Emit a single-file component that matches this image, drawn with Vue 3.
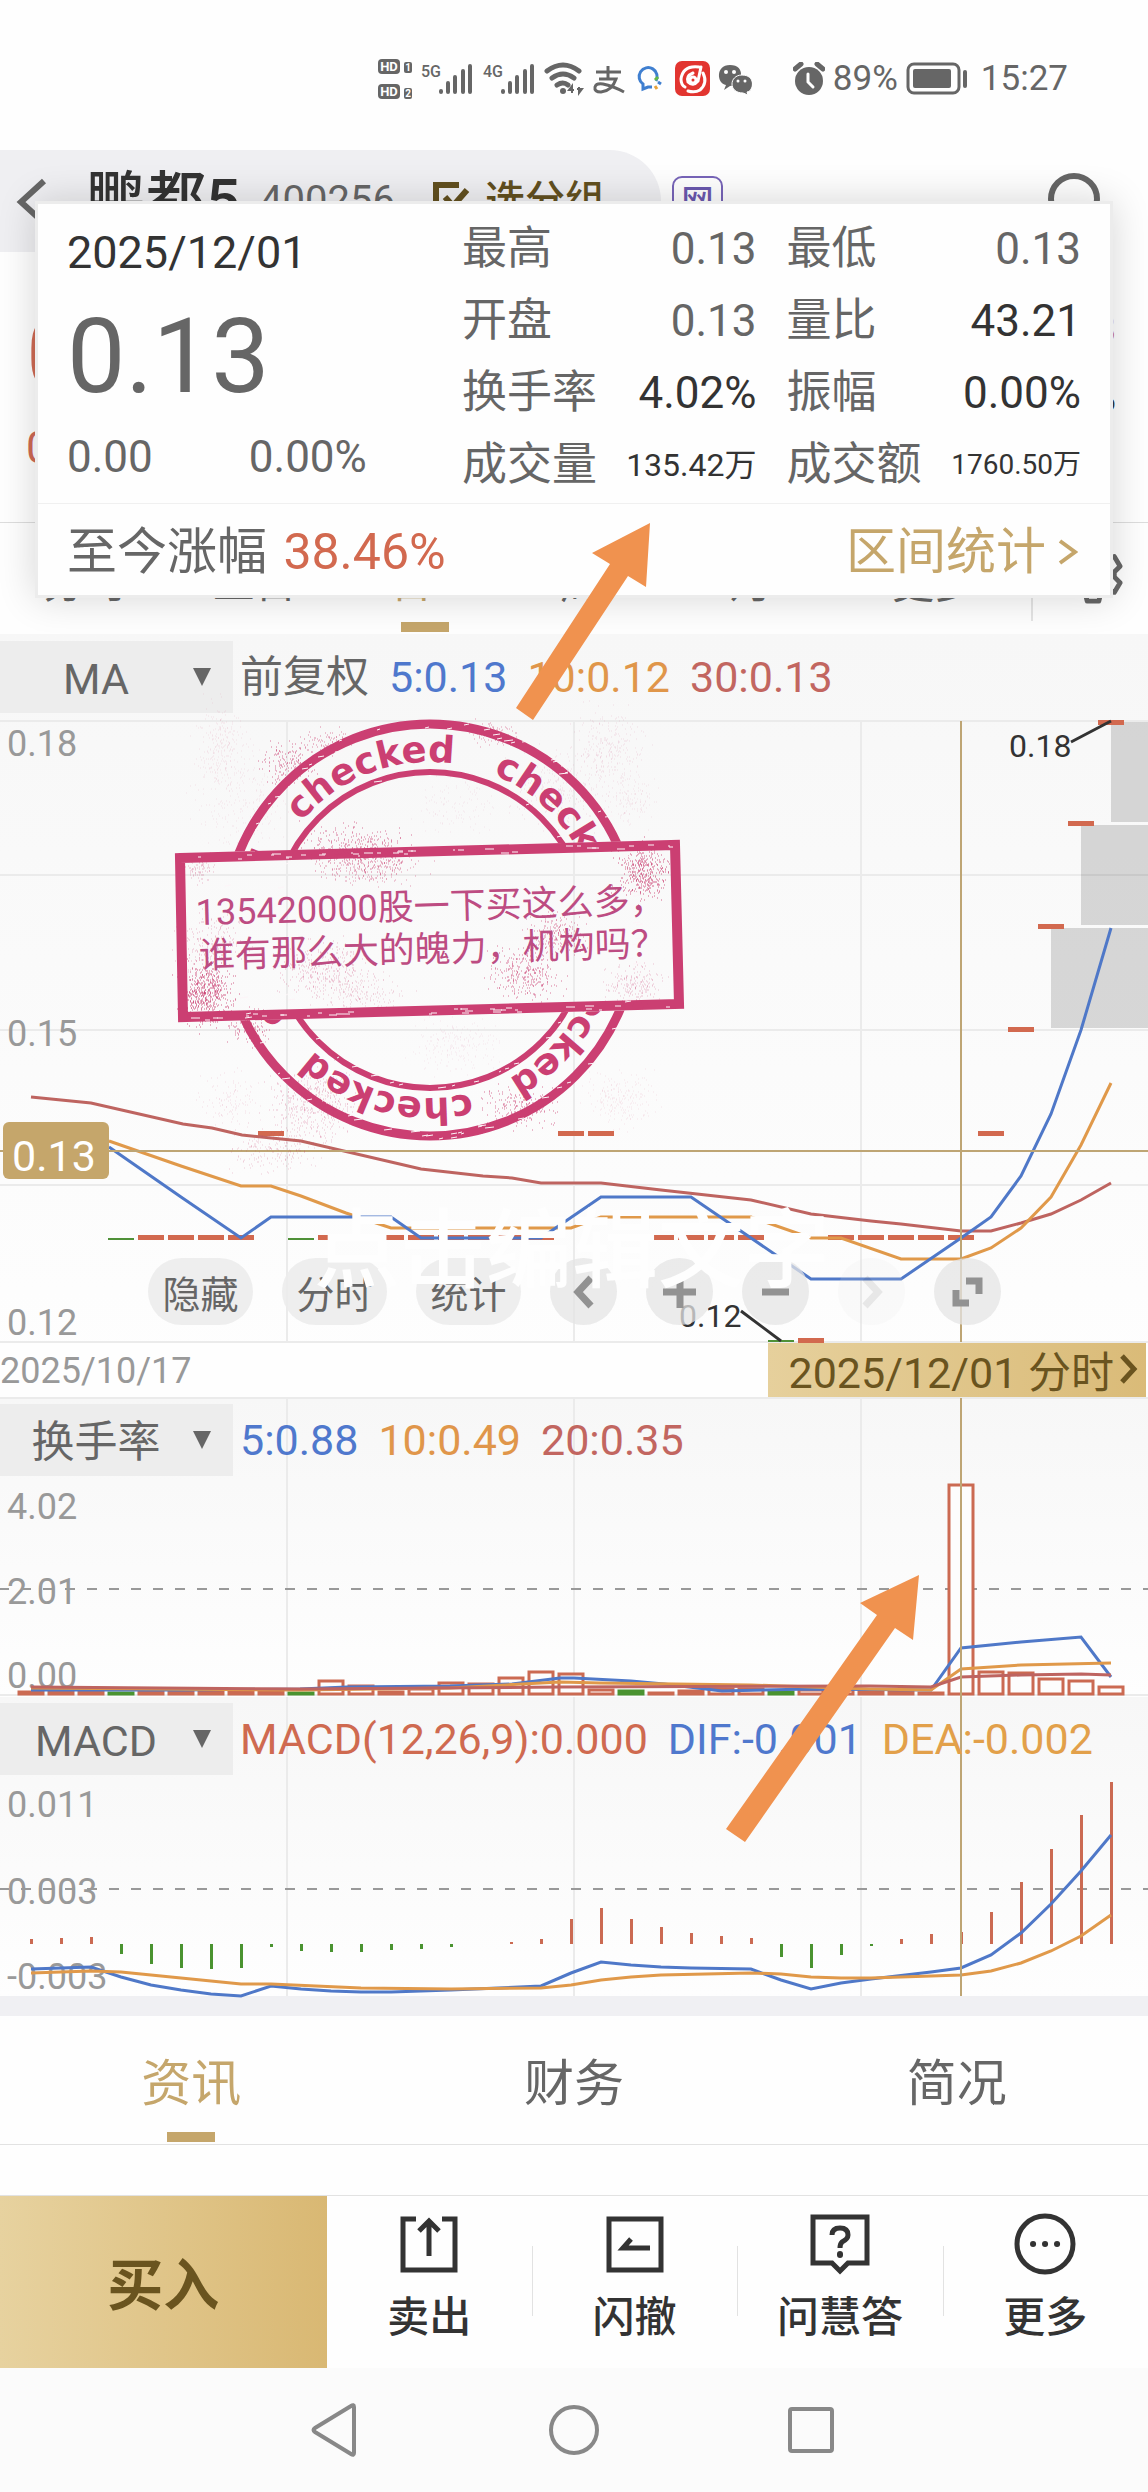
<template>
  <div class="stock-page">
    <div class="status-bar">
      <svg class="status-icons" viewBox="379 56 374 44" width="374" height="44">
        <g fill="#666">
          <rect x="379" y="58" width="22" height="15" rx="4" />
          <rect x="379" y="83" width="22" height="15" rx="4" />
          <rect x="405" y="61" width="8" height="11" rx="2" />
          <rect x="405" y="87" width="8" height="11" rx="2" />
        </g>
        <g class="hd-text">
          <text x="390" y="70">HD</text>
          <text x="390" y="95">HD</text>
          <text class="tiny" x="409" y="70">1</text>
          <text class="tiny" x="409" y="96">2</text>
        </g>
        <g class="net-text">
          <text x="422" y="76">5G</text>
          <text x="484" y="76">4G</text>
        </g>
        <g stroke="#666" stroke-width="4" stroke-linecap="round">
          <path d="M442 91v-1M449 91v-9M456 91v-15M464 91v-21M471 91v-26" />
          <path d="M504 91v-1M511 91v-9M518 91v-15M526 91v-21M533 91v-26" />
        </g>
        <g fill="none" stroke="#666" stroke-width="5" stroke-linecap="round">
          <path d="M548 70q16 -12 32 0M553 77q11 -8 22 0M558 84q6 -4 11 0" />
        </g>
        <circle cx="564" cy="90" r="3" fill="#666" />
        <path d="M573 92v-7l-3 4h5M580 86v6l3 -4h-5" fill="none" stroke="#666" stroke-width="2" />
        <path d="M597 71h25M609 65v13M600 78h17q-4 12 -15 13q-7 0 -6 -5q1 -4 8 -3q10 2 21 8" fill="none" stroke="#666" stroke-width="3" />
        <path d="M657 80a9 9 0 1 0 -13 3v5l5 -2h4" fill="none" stroke="#3f7fd0" stroke-width="3" />
        <path d="M656 79l3 -3" stroke="#63b946" stroke-width="3" />
        <path d="M659 81l3 2" stroke="#3f7fd0" stroke-width="3" />
        <path d="M656 85l2 3" stroke="#e7a33b" stroke-width="3" />
        <rect x="676" y="60" width="35" height="35" rx="7" fill="#e23530" />
        <g fill="none" stroke="#fff" stroke-width="3" stroke-linecap="round">
          <path d="M700 66q-16 -2 -18 12q0 6 4 8M704 72q5 10 -3 17q-5 3 -12 1M694 72q-7 3 -5 9q5 5 10 -1l3 -14" />
          <circle cx="694" cy="79" r="3" />
        </g>
        <g fill="#666">
          <path d="M731 64c-15 0 -13 19 -4 20l-2 5l6 -4q9 0 11 -9q1 -12 -11 -12z" />
          <path d="M743 74c14 0 12 16 5 17l1 3l-5 -2c-15 0 -14 -18 -1 -18z" stroke="#fff" stroke-width="1" />
        </g>
        <g fill="#fff">
          <circle cx="727" cy="71" r="2" /><circle cx="735" cy="71" r="2" />
          <circle cx="739" cy="80" r="1.500" /><circle cx="746" cy="80" r="1.500" />
        </g>
      </svg>
      <svg class="alarm" viewBox="0 0 32 34" width="32" height="34">
        <circle cx="16" cy="19" r="14" fill="#666" />
        <path d="M2 7l6 -5M30 7l-6 -5" stroke="#666" stroke-width="5" stroke-linecap="round" />
        <path d="M15 12v8l5 5" fill="none" stroke="#fff" stroke-width="3" stroke-linecap="round" />
      </svg>
      <span class="status-text">89%</span>
      <svg class="battery" viewBox="0 0 63 34" width="63" height="34">
        <rect x="2" y="2" width="51" height="29" rx="6" fill="none" stroke="#666" stroke-width="3" />
        <rect x="7" y="7" width="38" height="19" rx="2" fill="#666" />
        <path d="M59 10v14" stroke="#666" stroke-width="4" stroke-linecap="round" />
      </svg>
      <span class="status-text">15:27</span>
    </div>

    <section class="quote">
      <header class="quote-header">
        <div class="title-pill">
          <button class="back" aria-label="返回">
            <svg viewBox="0 0 34 52" width="34" height="52">
              <path d="M30 6L7 27L30 48" fill="none" stroke="#666" stroke-width="6" />
            </svg>
          </button>
          <h1>鹏都5</h1>
          <span class="code">400256</span>
          <svg class="group-icon" viewBox="0 0 38 38" width="38" height="38">
            <path d="M26 3H3V35H33V20M12 15l8 9L34 8" fill="none" stroke="#62501f" stroke-width="6" />
          </svg>
          <button class="group-btn">选分组</button>
        </div>
        <span class="net-badge">网</span>
        <button class="search" aria-label="搜索">
          <svg viewBox="0 0 60 60" width="60" height="60">
            <circle cx="28" cy="28" r="23" fill="none" stroke="#666" stroke-width="6" />
            <path d="M44 44l12 12" stroke="#666" stroke-width="6" />
          </svg>
        </button>
      </header>
      <div class="quote-body">
        <div class="quote-price">
          <strong>0.18</strong>
          <span>0.00</span>
        </div>
        <div class="quote-side">
          <span class="up">0.18</span>
          <span>4.02%</span>
        </div>
      </div>
      <nav class="period-tabs">
        <div class="periods">
          <button v-for="p in periods" :key="p" :class="{ active: p === '日K' }">{{ p }}</button>
        </div>
        <button class="gear" aria-label="设置">
          <svg viewBox="0 0 62 62" width="60" height="60">
            <path d="M25 4h12l2 8l6 4l8 -3l6 10l-6 6v5l6 6l-6 10l-8 -2l-6 3l-2 8h-12l-2 -8l-6 -3l-8 2l-6 -10l6 -6v-5l-6 -6l6 -10l8 3l6 -4z" fill="none" stroke="#666" stroke-width="5" stroke-linejoin="round" />
            <circle cx="31" cy="31" r="9" fill="none" stroke="#666" stroke-width="5" />
          </svg>
        </button>
      </nav>

      <div class="popup">
        <div class="popup-main">
          <div class="popup-left">
            <div class="popup-date">2025/12/01</div>
            <div class="popup-price">0.13</div>
            <div class="popup-change">
              <span>0.00</span>
              <span>0.00%</span>
            </div>
          </div>
          <dl class="popup-grid">
            <div v-for="s in stats" :key="s.label" class="stat">
              <dt>{{ s.label }}</dt>
              <dd :class="s.cls">{{ s.value }}</dd>
            </div>
          </dl>
        </div>
        <div class="popup-footer">
          <span>至今涨幅 <b>38.46%</b></span>
          <a href="#">区间统计
            <svg viewBox="0 0 20 26" width="20" height="26">
              <path d="M2 2L17 13L2 24" fill="none" stroke="#c5a66b" stroke-width="4" />
            </svg>
          </a>
        </div>
      </div>
    </section>

    <section class="panel price-panel">
      <div class="panel-head">
        <div class="indicator">
          <select aria-label="主图指标"><option>MA</option><option>BOLL</option></select>
        </div>
        <span>前复权</span>
        <span class="blue">5:0.13</span>
        <span class="orange">10:0.12</span>
        <span class="red">30:0.13</span>
      </div>
      <div class="chart-wrap">
        <svg class="chart" viewBox="0 720 1148 623">
          <path d="M0 721H1148M0 875H1148M0 1030H1148M0 1185H1148M0 1342H1148M287 720V1342M574 720V1342M861 720V1342" class="grid" />
          <g fill="#000" fill-opacity="0.14">
            <rect x="1111" y="722" width="37" height="100" />
            <rect x="1081" y="825" width="67" height="100" />
            <rect x="1051" y="928" width="97" height="100" />
          </g>
          <g class="axis">
            <text x="7" y="756">0.18</text>
            <text x="7" y="1046">0.15</text>
            <text x="7" y="1335">0.12</text>
          </g>
          <rect
            v-for="c in candles" :key="`${c.i}-${c.y}`"
            :x="x(c.i) - 13" :y="c.green ? c.y : c.y - 3"
            width="26" :height="c.green ? 2 : 5"
            :fill="c.green ? '#4f9138' : '#d2694f'"
          />
          <polyline :points="ma30" class="line red-line" />
          <polyline :points="ma10" class="line orange-line" />
          <polyline :points="ma5" class="line blue-line" />
          <path d="M0 1151H1148M961 721V1342" class="cross" />
          <path d="M1071 742L1111 721M741 1311L781 1341" stroke="#333" stroke-width="3" />
          <g class="mark">
            <text x="1009" y="757">0.18</text>
            <text x="679" y="1327">0.12</text>
          </g>
          <rect x="3" y="1122" width="106" height="57" rx="6" fill="#c5a66b" />
          <text x="12" y="1171" class="price-tag">0.13</text>
        </svg>
        <div class="chart-tools">
          <button class="pill">隐藏</button>
          <button class="pill">分时</button>
          <button class="pill">统计</button>
          <button v-for="t in tools" :key="t.name" class="round" :class="{ faint: t.faint }" :aria-label="t.name">
            <svg viewBox="0 0 67 67" width="67" height="67">
              <path :d="t.d" fill="none" stroke="#929292" stroke-width="7" />
            </svg>
          </button>
        </div>
      </div>
      <div class="date-row">
        <span>2025/10/17</span>
        <button class="date-tag">2025/12/01 分时
          <svg viewBox="0 0 18 30" width="18" height="30">
            <path d="M2 2L14 15L2 28" fill="none" stroke="#6a541f" stroke-width="5" />
          </svg>
        </button>
      </div>
    </section>

    <section class="panel">
      <svg class="chart" viewBox="0 1398 1148 299">
        <path d="M0 1398H1148M0 1695H1148M287 1398V1695M574 1398V1695M861 1398V1695" class="grid" />
        <path d="M-1 1589H1148" class="dashed" />
        <g class="axis">
          <text x="7" y="1519">4.02</text>
          <text x="7" y="1604">2.01</text>
          <text x="7" y="1688">0.00</text>
        </g>
        <rect
          v-for="b in volumes" :key="b.i"
          :x="x(b.i) - 12" :y="b.top" width="24" :height="1694 - b.top"
          :fill="b.green ? '#4a9330' : '#fdfdfd'" :stroke="b.green ? '#4a9330' : '#cb6a52'"
          stroke-width="3"
        />
        <polyline points="31,1690 181,1690 300,1689 347,1687 450,1686 512,1684 560,1678 574,1678 631,1681 664,1684 722,1691 811,1689 931,1690 961,1648 1021,1642 1081,1637 1111,1677" class="line blue-line" />
        <polyline points="31,1688 300,1690 450,1688 560,1682 600,1683 751,1685 870,1689 931,1690 961,1669 1021,1665 1111,1663" class="line orange-line" />
        <polyline points="31,1687 300,1689 560,1687 870,1686 931,1687 961,1677 1021,1675 1081,1674 1111,1675" class="line red-line" />
        <path d="M961 1398V1697" class="cross" />
      </svg>
      <div class="panel-head over">
        <div class="indicator">
          <select aria-label="副图指标一"><option>换手率</option><option>成交量</option></select>
        </div>
        <span class="blue">5:0.88</span>
        <span class="orange">10:0.49</span>
        <span class="red">20:0.35</span>
      </div>
    </section>

    <section class="panel">
      <svg class="chart" viewBox="0 1697 1148 299">
        <path d="M287 1697V1996M574 1697V1996M861 1697V1996" class="grid" />
        <path d="M-1 1889H1148" class="dashed" />
        <g class="axis">
          <text x="7" y="1817">0.011</text>
          <text x="7" y="1904">0.003</text>
          <text x="7" y="1989">-0.003</text>
        </g>
        <rect
          v-for="(v, i) in macd" :key="i"
          :x="x(i) - 1" :y="v > 0 ? 1944 - v : 1944" width="3" :height="Math.abs(v)"
          :fill="v > 0 ? '#cb6a52' : '#4a9330'"
        />
        <polyline points="31,1969 91,1967 121,1977 151,1985 181,1990 211,1994 241,1996 271,1986 301,1989 331,1991 361,1992 391,1992 451,1990 541,1986 571,1973 601,1962 631,1965 661,1967 691,1968 751,1969 781,1980 811,1989 841,1983 871,1979 931,1972 961,1968 991,1955 1021,1933 1051,1904 1081,1871 1111,1835" class="line blue-line" />
        <polyline points="31,1973 91,1971 121,1972 181,1978 241,1984 271,1984 361,1988 451,1989 541,1988 571,1985 601,1980 631,1977 661,1975 751,1973 781,1974 811,1977 841,1978 871,1978 931,1976 961,1975 991,1971 1021,1963 1051,1951 1081,1936 1111,1915" class="line orange-line" />
        <path d="M961 1697V1996" class="cross" />
      </svg>
      <div class="panel-head over">
        <div class="indicator">
          <select aria-label="副图指标二"><option>MACD</option><option>KDJ</option></select>
        </div>
        <span class="vermilion">MACD(12,26,9):0.000</span>
        <span class="blue">DIF:-0.001</span>
        <span class="dea">DEA:-0.002</span>
      </div>
    </section>

    <nav class="info-tabs">
      <button class="active">资讯</button>
      <button>财务</button>
      <button>简况</button>
    </nav>

    <footer class="trade-bar">
      <button class="buy">买入</button>
      <button v-for="a in actions" :key="a.name" class="action">
        <svg viewBox="0 0 64 64" width="64" height="64">
          <path :d="a.d" fill="none" stroke="#333" stroke-width="5" />
          <path v-if="a.dots" :d="a.dots" stroke="#333" stroke-width="6" stroke-linecap="round" />
        </svg>
        <span>{{ a.name }}</span>
      </button>
    </footer>

    <div class="system-nav">
      <button aria-label="后退">
        <svg viewBox="0 0 56 56" width="56" height="56">
          <path d="M45 5V51Q45 54 42 52L6 30Q3 28 6 26L42 4Q45 2 45 5z" fill="none" stroke="#888" stroke-width="4" />
        </svg>
      </button>
      <button aria-label="主页">
        <svg viewBox="0 0 56 56" width="56" height="56">
          <circle cx="28" cy="28" r="23" fill="none" stroke="#888" stroke-width="4" />
        </svg>
      </button>
      <button aria-label="最近">
        <svg viewBox="0 0 56 56" width="56" height="56">
          <rect x="7" y="7" width="42" height="42" rx="2" fill="none" stroke="#888" stroke-width="4" />
        </svg>
      </button>
    </div>

    <!-- 标注层：印章、箭头、占位文字 -->
    <svg class="notes" viewBox="0 0 1148 2492">
      <defs>
        <clipPath id="outside-banner">
          <path clip-rule="evenodd" d="M0 600H1148V1300H0zM175 853L680 840L684 1009L179 1022z" />
        </clipPath>
        <path id="ring" d="M430 762a168 168 0 0 1 0 336a168 168 0 0 1 0 -336" />
      </defs>
      <g clip-path="url(#outside-banner)">
        <circle cx="430" cy="930" r="206" class="ink" stroke-width="9" />
        <circle cx="430" cy="930" r="158" class="ink" stroke-width="6" />
        <text v-for="a in ringAngles" :key="a" class="ring-text" :transform="`rotate(${a} 430 930)`">
          <textPath href="#ring">checked</textPath>
        </text>
      </g>
      <path d="M180 858L675 845L679 1004L183 1017z" class="ink" stroke-width="10" />
      <path v-for="(s, i) in speckles" :key="i" :d="s.d" stroke="#cb3f72" stroke-width="1" :stroke-opacity="s.o" />
      <path :d="scratches" stroke="#fdf5f8" stroke-width="1" />
      <g class="stamp-text" transform="rotate(-1.500 198 923)">
        <text x="196" y="925">135420000股一下买这么多，</text>
        <text x="198" y="968">谁有那么大的魄力，机构吗？</text>
      </g>
      <text x="314" y="1281" class="placeholder">点击编辑文字</text>
      <g fill="#f0924f">
        <path d="M650 523L592 553L610 564L516 708L533 720L628 576L646 587z" />
        <path d="M919 1575L860 1603L877 1615L726 1829L745 1842L895 1628L913 1640z" />
      </g>
    </svg>
  </div>
</template>

<script setup>
const periods = ['分时', '五日', '日K', '周K', '月K', '更多']

const stats = [
  { label: '最高', value: '0.13', cls: 'flat' },
  { label: '最低', value: '0.13', cls: 'flat' },
  { label: '开盘', value: '0.13', cls: 'flat' },
  { label: '量比', value: '43.21' },
  { label: '换手率', value: '4.02%' },
  { label: '振幅', value: '0.00%' },
  { label: '成交量', value: '135.42万', cls: 'mid' },
  { label: '成交额', value: '1760.50万', cls: 'small' }
]

const tools = [
  { name: '左移', d: 'M41 20L28 34L41 48' },
  { name: '放大', d: 'M17 34H50M34 17V50' },
  { name: '缩小', d: 'M20 34H47' },
  { name: '右移', d: 'M27 20L40 34L27 48', faint: true },
  { name: '全屏', d: 'M32 23H45V36M22 32V45H35' }
]

const actions = [
  { name: '卖出', d: 'M19 7H6V58H58V7H45M32 44V10M22 19L32 9L42 19' },
  { name: '闪撤', d: 'M6 7H58V58H6zM47 36H20L28 27' },
  { name: '问慧答', d: 'M5 5H59V51H40L32 59L24 51H5zM24 23Q24 16 32 16Q40 16 40 23Q40 27 34 30Q32 32 32 36', dots: 'M32 42v1' },
  { name: '更多', d: 'M32 4a28 28 0 1 1 0 56a28 28 0 1 1 0 -56', dots: 'M20 32h.1M32 32h.1M44 32h.1' }
]

const x = (i) => 31 + i * 30

// K线
const candles = [
  { i: 8, y: 1134 }, { i: 18, y: 1134 }, { i: 19, y: 1134 }, { i: 32, y: 1134 },
  { i: 33, y: 1030 }, { i: 34, y: 927 }, { i: 35, y: 824 }, { i: 36, y: 723 },
  { i: 26, y: 1341 }, { i: 25, y: 1340, green: true },
  ...[3, 9, 20].map((i) => ({ i, y: 1238, green: true })),
  ...[4, 5, 6, 7, 10, 11, 12, 13, 14, 15, 16, 17, 21, 22, 23, 24, 27, 28, 29, 30, 31].map((i) => ({ i, y: 1238 }))
]

const ma30 = '31,1097 91,1103 183,1124 212,1128 242,1135 301,1141 421,1169 483,1176 512,1178 541,1183 601,1183 661,1190 751,1200 811,1214 871,1221 901,1224 961,1231 991,1231 1021,1223 1051,1214 1081,1200 1111,1183'
const ma10 = '109,1141 181,1166 241,1186 271,1186 301,1196 346,1213 391,1228 571,1228 601,1217 751,1217 811,1238 841,1238 901,1259 961,1259 991,1248 1021,1228 1051,1197 1081,1145 1111,1083'
const ma5 = '109,1147 181,1197 241,1238 271,1217 391,1217 421,1238 541,1238 601,1197 691,1197 811,1279 901,1279 961,1238 991,1217 1021,1176 1051,1114 1081,1030 1111,928'

// 换手率柱
const volumeTops = [
  1692, 1692, 1692, 1693, 1692, 1692, 1692, 1692, 1692, 1693, 1681, 1686, 1692, 1689, 1683, 1684, 1678, 1672, 1674,
  1690, 1691, 1693, 1691, 1689, 1689, 1692, 1690, 1690, 1691, 1692, 1693, 1485, 1672, 1673, 1679, 1681, 1687
]
const volumes = volumeTops.map((top, i) => ({ i, top, green: [3, 9, 20, 25].includes(i) }))

const macd = [
  5, 6, 7, -10, -20, -24, -25, -24, -3, -7, -8, -8, -6, -5, -3, 0, 2, 5, 25, 36, 25, 17, 11, 8, 6,
  -13, -24, -11, -2, 5, 10, 12, 32, 62, 95, 129, 162
]

// 印章
const ringAngles = [-50, 22, 94, 166, 238]

let seed = 7
const rand = () => {
  seed = (seed * 16807) % 2147483647
  return seed / 2147483647
}
const spread = () => (rand() + rand() + rand() - 1.5) / 1.5

// cx, cy, rx, ry, 数量, 透明度
const clusters = [
  [357, 850, 70, 34, 420, 0.7], [370, 870, 70, 20, 200, 0.5], [205, 993, 38, 45, 600, 0.8],
  [643, 872, 36, 38, 420, 0.8], [525, 975, 50, 38, 320, 0.7], [555, 935, 40, 30, 220, 0.6],
  [290, 762, 36, 30, 180, 0.7], [325, 742, 34, 20, 90, 0.6], [518, 1107, 50, 28, 200, 0.7],
  [250, 1028, 30, 26, 110, 0.7], [325, 970, 70, 40, 350, 0.35], [210, 945, 50, 40, 220, 0.35],
  [635, 985, 40, 30, 220, 0.3], [360, 995, 60, 26, 180, 0.25], [198, 868, 22, 20, 90, 0.35],
  [315, 1105, 60, 50, 520, 0.3], [275, 1150, 60, 30, 200, 0.25], [220, 745, 34, 60, 260, 0.13],
  [607, 750, 50, 60, 300, 0.14], [560, 790, 60, 50, 260, 0.14], [495, 735, 34, 18, 110, 0.5],
  [632, 800, 36, 40, 140, 0.12], [455, 1045, 60, 40, 220, 0.1], [620, 1100, 50, 40, 220, 0.13],
  [240, 800, 60, 70, 220, 0.12], [455, 805, 60, 40, 120, 0.1], [230, 1100, 40, 40, 120, 0.15]
]
const speckles = clusters.map(([cx, cy, rx, ry, n, o]) => {
  let d = ''
  for (let k = 0; k < n; k++) {
    d += `M${Math.round(cx + spread() * rx)} ${Math.round(cy + spread() * ry)}h1`
  }
  return { d, o }
})

let scratches = ''
for (let k = 0; k < 110; k++) {
  const a = rand() * Math.PI * 2
  const r = k % 4 === 0 ? 158 : 201 + rand() * 9
  scratches += `M${Math.round(430 + r * Math.cos(a))} ${Math.round(930 + r * Math.sin(a))}l${2 + Math.round(rand() * 7)} -1`
}
for (let k = 0; k < 70; k++) {
  const t = rand() * 490
  const bottom = k % 2 ? 0 : 160
  scratches += `M${Math.round(180 + t)} ${Math.round(856 + bottom - t * 0.026 + rand() * 5)}h${2 + Math.round(rand() * 7)}`
}
</script>

<style>
body {
  margin: 0;
  background: #fefefe;
}
</style>

<style scoped>
.stock-page {
  position: relative;
  font-family: Roboto, "Noto Sans CJK SC", sans-serif;
  color: #666;
  background: #fefefe;
  overflow: hidden;
}

button {
  padding: 0;
  border: none;
  background: none;
  color: inherit;
  font: inherit;
}

svg {
  display: block;
}

.status-bar {
  display: flex;
  align-items: center;
  justify-content: flex-end;
  height: 150px;
  padding: 8px 80px 0 0;
  box-sizing: border-box;
}

.status-icons {
  margin-right: 41px;
}

.status-text {
  font-size: 35px;
  line-height: 40px;
}

.alarm {
  margin-right: 8px;
}

.battery {
  margin: 0 12px 0 8px;
}

.hd-text text {
  font-size: 13px;
  font-weight: 700;
  fill: #fff;
  text-anchor: middle;
}

.hd-text .tiny {
  font-size: 10px;
}

.net-text text {
  font-size: 16px;
  font-weight: 500;
  fill: #666;
}

.quote {
  position: relative;
}

.quote-header {
  display: flex;
  align-items: center;
  height: 102px;
}

.title-pill {
  display: flex;
  align-items: center;
  box-sizing: border-box;
  width: 661px;
  height: 102px;
  padding-left: 14px;
  background: #efeff2;
  border-radius: 0 51px 51px 0;
}

.title-pill h1 {
  margin: 0 20px 0 38px;
  font-size: 60px;
  font-weight: 500;
  line-height: 60px;
  color: #333;
}

.code {
  font-size: 40px;
  line-height: 44px;
  margin-right: 38px;
}

.group-icon {
  margin-right: 14px;
}

.group-btn {
  font-size: 40px;
  font-weight: 500;
  line-height: 44px;
  color: #62501f;
}

.net-badge {
  box-sizing: border-box;
  width: 51px;
  height: 51px;
  margin-left: 11px;
  border: 2px solid #7764b8;
  border-radius: 10px;
  font-size: 32px;
  font-weight: 500;
  line-height: 46px;
  text-align: center;
  color: #6a58ae;
}

.search {
  margin: 0 42px 0 auto;
}

.quote-body {
  display: flex;
  justify-content: space-between;
  box-sizing: border-box;
  height: 271px;
  padding: 44px 32px 0 26px;
  border-bottom: 1px solid #ddd;
}

.quote-price {
  display: flex;
  flex-direction: column;
  color: #cf6a54;
}

.quote-price strong {
  font-size: 96px;
  font-weight: 400;
  line-height: 118px;
}

.quote-price span {
  font-size: 44px;
  line-height: 68px;
}

.quote-side {
  display: flex;
  flex-direction: column;
  font-size: 40px;
  line-height: 68px;
  color: #333;
  text-align: right;
}

.quote-side .up {
  color: #cf6a54;
}

.period-tabs {
  display: flex;
  height: 111px;
}

.periods {
  display: grid;
  grid-template-columns: repeat(6, 1fr);
  flex: 1;
  padding-right: 12px;
  font-size: 42px;
}

.periods button {
  position: relative;
  padding-top: 2px;
}

.periods .active,
.info-tabs .active {
  color: #c5a66b;
}

.periods .active::after,
.info-tabs .active::after {
  content: "";
  position: absolute;
  left: 50%;
  bottom: 2px;
  width: 48px;
  height: 10px;
  margin-left: -24px;
  background: #c5a66b;
}

.gear {
  display: flex;
  align-items: center;
  justify-content: center;
  box-sizing: border-box;
  width: 117px;
  height: 98px;
  padding: 4px 0 0 4px;
  border-left: 2px solid #e4e4e4;
}

.popup {
  position: absolute;
  z-index: 2;
  top: 51px;
  left: 35px;
  right: 35px;
  box-sizing: border-box;
  height: 397px;
  border: 3px solid #ececec;
  background: #fefefe;
  box-shadow: 0 0 36px rgba(0, 0, 0, 0.16);
}

.popup-main {
  display: flex;
  box-sizing: border-box;
  height: 300px;
  padding: 9px 29px 0 29px;
  border-bottom: 1px solid #f0f0f0;
}

.popup-left {
  width: 395px;
}

.popup-date {
  padding-top: 14px;
  font-size: 45px;
  line-height: 52px;
  color: #333;
}

.popup-price {
  margin-top: 10px;
  font-size: 104px;
  line-height: 136px;
}

.popup-change {
  display: flex;
  gap: 96px;
  margin-top: 6px;
  font-size: 44px;
  line-height: 52px;
}

.popup-grid {
  display: grid;
  grid-template-columns: 1fr 1fr;
  grid-auto-rows: 72px;
  column-gap: 30px;
  flex: 1;
  margin: 0;
}

.stat {
  display: flex;
  align-items: center;
  justify-content: space-between;
  font-size: 45px;
  line-height: 72px;
  white-space: nowrap;
}

.stat dd {
  margin: 0;
  font-size: 44px;
  color: #333;
}

.stat .flat {
  color: #666;
}

.stat .mid {
  font-size: 32px;
}

.stat .small {
  font-size: 28px;
}

.popup-footer {
  display: flex;
  align-items: center;
  justify-content: space-between;
  height: 91px;
  padding: 2px 32px 0 29px;
  font-size: 50px;
  line-height: 56px;
}

.popup-footer b {
  margin-left: 4px;
  font-weight: 400;
  color: #d2694f;
}

.popup-footer a {
  display: flex;
  align-items: center;
  gap: 12px;
  color: #c5a66b;
  text-decoration: none;
}

.panel {
  position: relative;
  background: linear-gradient(#f7f7f7, #fefefe);
}

.panel-head {
  display: flex;
  align-items: center;
  gap: 20px;
  box-sizing: border-box;
  height: 86px;
  font-size: 43px;
  line-height: 50px;
  white-space: nowrap;
}

.panel-head.over {
  position: absolute;
  top: 0;
  left: 0;
  right: 0;
  height: 84px;
}

.indicator {
  position: relative;
  width: 233px;
  height: 72px;
  margin-right: -13px;
}

.indicator::after {
  content: "";
  position: absolute;
  top: 27px;
  left: 193px;
  border: 9px solid transparent;
  border-top: 18px solid #666;
  border-bottom: 0;
}

.indicator select {
  appearance: none;
  width: 233px;
  height: 72px;
  padding: 3px 41px 0 0;
  border: none;
  border-radius: 0;
  background: #ededed;
  color: #666;
  font: inherit;
  text-align: center;
  text-align-last: center;
}

.blue { color: #4f78cd; }
.orange { color: #e0964a; }
.red { color: #c26660; }
.vermilion { color: #cf6a50; }
.dea { color: #e2a04a; }

.chart-wrap {
  position: relative;
}

.chart {
  width: 100%;
  height: auto;
  overflow: visible;
}

.grid {
  fill: none;
  stroke: #ebebeb;
  stroke-width: 2;
}

.cross {
  fill: none;
  stroke: #bea574;
  stroke-width: 2;
}

.dashed {
  stroke: #999;
  stroke-width: 2;
  stroke-dasharray: 10 12;
}

.axis text {
  font-size: 36px;
  fill: #999;
}

.mark text {
  font-size: 32px;
  fill: #333;
}

.price-tag {
  font-size: 43px;
  fill: #fff;
}

.line {
  fill: none;
  stroke-width: 3;
}

.blue-line { stroke: #4f78c8; }
.orange-line { stroke: #e0994a; }
.red-line { stroke: #be6460; }

.chart-tools {
  position: absolute;
  left: 148px;
  bottom: 18px;
  display: flex;
  gap: 29px;
}

.pill {
  width: 105px;
  height: 67px;
  border-radius: 34px;
  background: rgba(236, 236, 236, 0.9);
  font-size: 38px;
}

.round {
  width: 67px;
  height: 67px;
  border-radius: 50%;
  background: rgba(228, 228, 228, 0.75);
}

.round.faint {
  opacity: 0.2;
}

.date-row {
  display: flex;
  align-items: center;
  justify-content: space-between;
  height: 55px;
  padding: 0 2px 0 0;
  background: #fefefe;
  font-size: 36px;
  color: #999;
}

.date-tag {
  display: flex;
  align-items: center;
  gap: 6px;
  height: 55px;
  padding: 0 8px 4px 21px;
  background: linear-gradient(90deg, #e6d09c, #dabb78);
  color: #6a541f;
  font-size: 43px;
}

.info-tabs {
  display: grid;
  grid-template-columns: repeat(3, 1fr);
  height: 128px;
  border-top: 20px solid #f0f0f3;
  border-bottom: 1px solid #e2e2e2;
  font-size: 50px;
}

.info-tabs button {
  position: relative;
  padding-bottom: 2px;
}

.trade-bar {
  display: flex;
  height: 172px;
  margin-top: 50px;
  border-top: 1px solid #e2e2e2;
}

.buy {
  flex: 326;
  padding-bottom: 4px;
  background: linear-gradient(90deg, #e7d29f, #d9b873);
  color: #6a541f;
  font-size: 56px;
  font-weight: 700;
}

.action {
  position: relative;
  display: flex;
  flex-direction: column;
  align-items: center;
  flex: 205;
  padding-top: 16px;
  color: #333;
  font-size: 42px;
  font-weight: 500;
  line-height: 50px;
}

.action span {
  margin-top: 17px;
}

.action + .action::before {
  content: "";
  position: absolute;
  top: 50px;
  left: 0;
  width: 1px;
  height: 70px;
  background: #e2e2e2;
}

.system-nav {
  display: flex;
  align-items: center;
  justify-content: center;
  gap: 181px;
  height: 124px;
  background: #fbfbfb;
}

.notes {
  position: absolute;
  z-index: 3;
  top: 0;
  left: 0;
  width: 100%;
  pointer-events: none;
}

.ink {
  fill: none;
  stroke: #cb3f72;
}

.ring-text {
  font-family: "DejaVu Sans", sans-serif;
  font-size: 37px;
  font-weight: 700;
  fill: #cb3f72;
}

.stamp-text {
  font-size: 36px;
  fill: #bd4c82;
}

.placeholder {
  font-size: 86px;
  font-weight: 500;
  fill: #fefefe;
}
</style>
